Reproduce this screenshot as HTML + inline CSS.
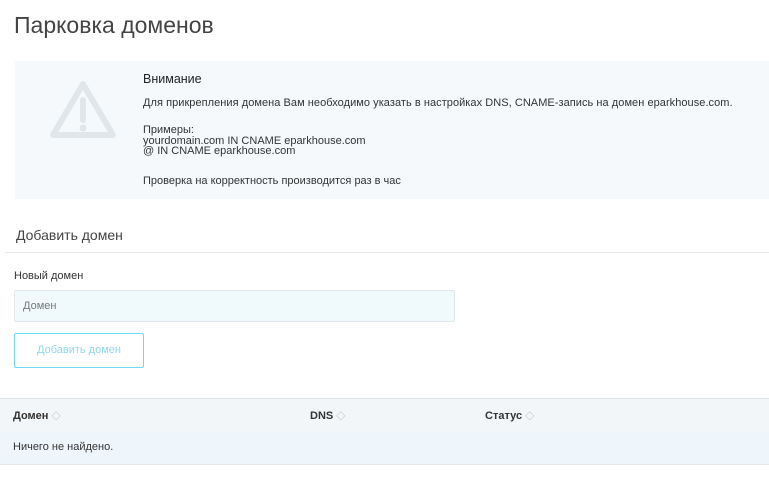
<!DOCTYPE html>
<html><head><meta charset="utf-8"><style>
body{margin:0;width:769px;height:494px;background:#fff;font-family:"Liberation Sans",sans-serif;color:#333;position:relative;overflow:hidden}
.a{position:absolute;white-space:nowrap}
</style></head><body>
<div class="a" style="left:14px;top:12px;font-size:23px;color:#444">Парковка доменов</div>
<div class="a" style="left:15px;top:61px;width:754px;height:138px;background:#f5f9fc"></div>
<svg class="a" style="left:49px;top:80px" width="68" height="60" viewBox="0 0 68 60"><path d="M34 4 L64 55 L4 55 Z" fill="none" stroke="#e0e6ea" stroke-width="6" stroke-linejoin="round"/><path d="M34 20 V40" stroke="#e0e6ea" stroke-width="6" stroke-linecap="round"/><circle cx="34" cy="48" r="3.5" fill="#e0e6ea"/></svg>
<div class="a" style="left:143px;top:72px;font-size:12.5px;color:#222">Внимание</div>
<div class="a" style="left:143px;top:97px;font-size:11px;color:#333;letter-spacing:0.05px">Для прикрепления домена Вам необходимо указать в настройках DNS, CNAME-запись на домен eparkhouse.com.</div>
<div class="a" style="left:143px;top:125px;font-size:11px;line-height:10.5px;color:#333">Примеры:<br>yourdomain.com IN CNAME eparkhouse.com<br>@ IN CNAME eparkhouse.com</div>
<div class="a" style="left:143px;top:175px;font-size:11px;color:#333">Проверка на корректность производится раз в час</div>
<div class="a" style="left:16px;top:227px;font-size:14px;color:#444">Добавить домен</div>
<div class="a" style="left:5px;top:252px;width:764px;height:1px;background:#e4e8eb"></div>
<div class="a" style="left:14px;top:270px;font-size:11px;color:#333">Новый домен</div>
<div class="a" style="left:14px;top:290px;width:439px;height:30px;background:#f0fafd;border:1px solid #e2e8ea;border-radius:2px"></div>
<div class="a" style="left:23px;top:300px;font-size:11px;color:#777">Домен</div>
<div class="a" style="left:14px;top:333px;width:128px;height:33px;border:1px solid #6fd8f2;border-radius:2px;font-size:11px;color:#8fd6ee;text-align:center;line-height:33px">Добавить домен</div>
<div class="a" style="left:0;top:398px;width:769px;height:33px;background:#f3f6f8;border-top:1px solid #e2e6e9;border-bottom:1px solid #e2e6e9"></div>
<div class="a" style="left:13px;top:408px;font-size:11px;font-weight:bold;color:#333">Домен <span style="color:#ccc;font-weight:normal;font-size:12px">◇</span></div>
<div class="a" style="left:310px;top:408px;font-size:11px;font-weight:bold;color:#333">DNS <span style="color:#ccc;font-weight:normal;font-size:12px">◇</span></div>
<div class="a" style="left:485px;top:408px;font-size:11px;font-weight:bold;color:#333">Статус <span style="color:#ccc;font-weight:normal;font-size:12px">◇</span></div>
<div class="a" style="left:0;top:432px;width:769px;height:32px;background:#eef6fc;border-bottom:1px solid #e2e6e9"></div>
<div class="a" style="left:13px;top:441px;font-size:11px;color:#333">Ничего не найдено.</div>
</body></html>
